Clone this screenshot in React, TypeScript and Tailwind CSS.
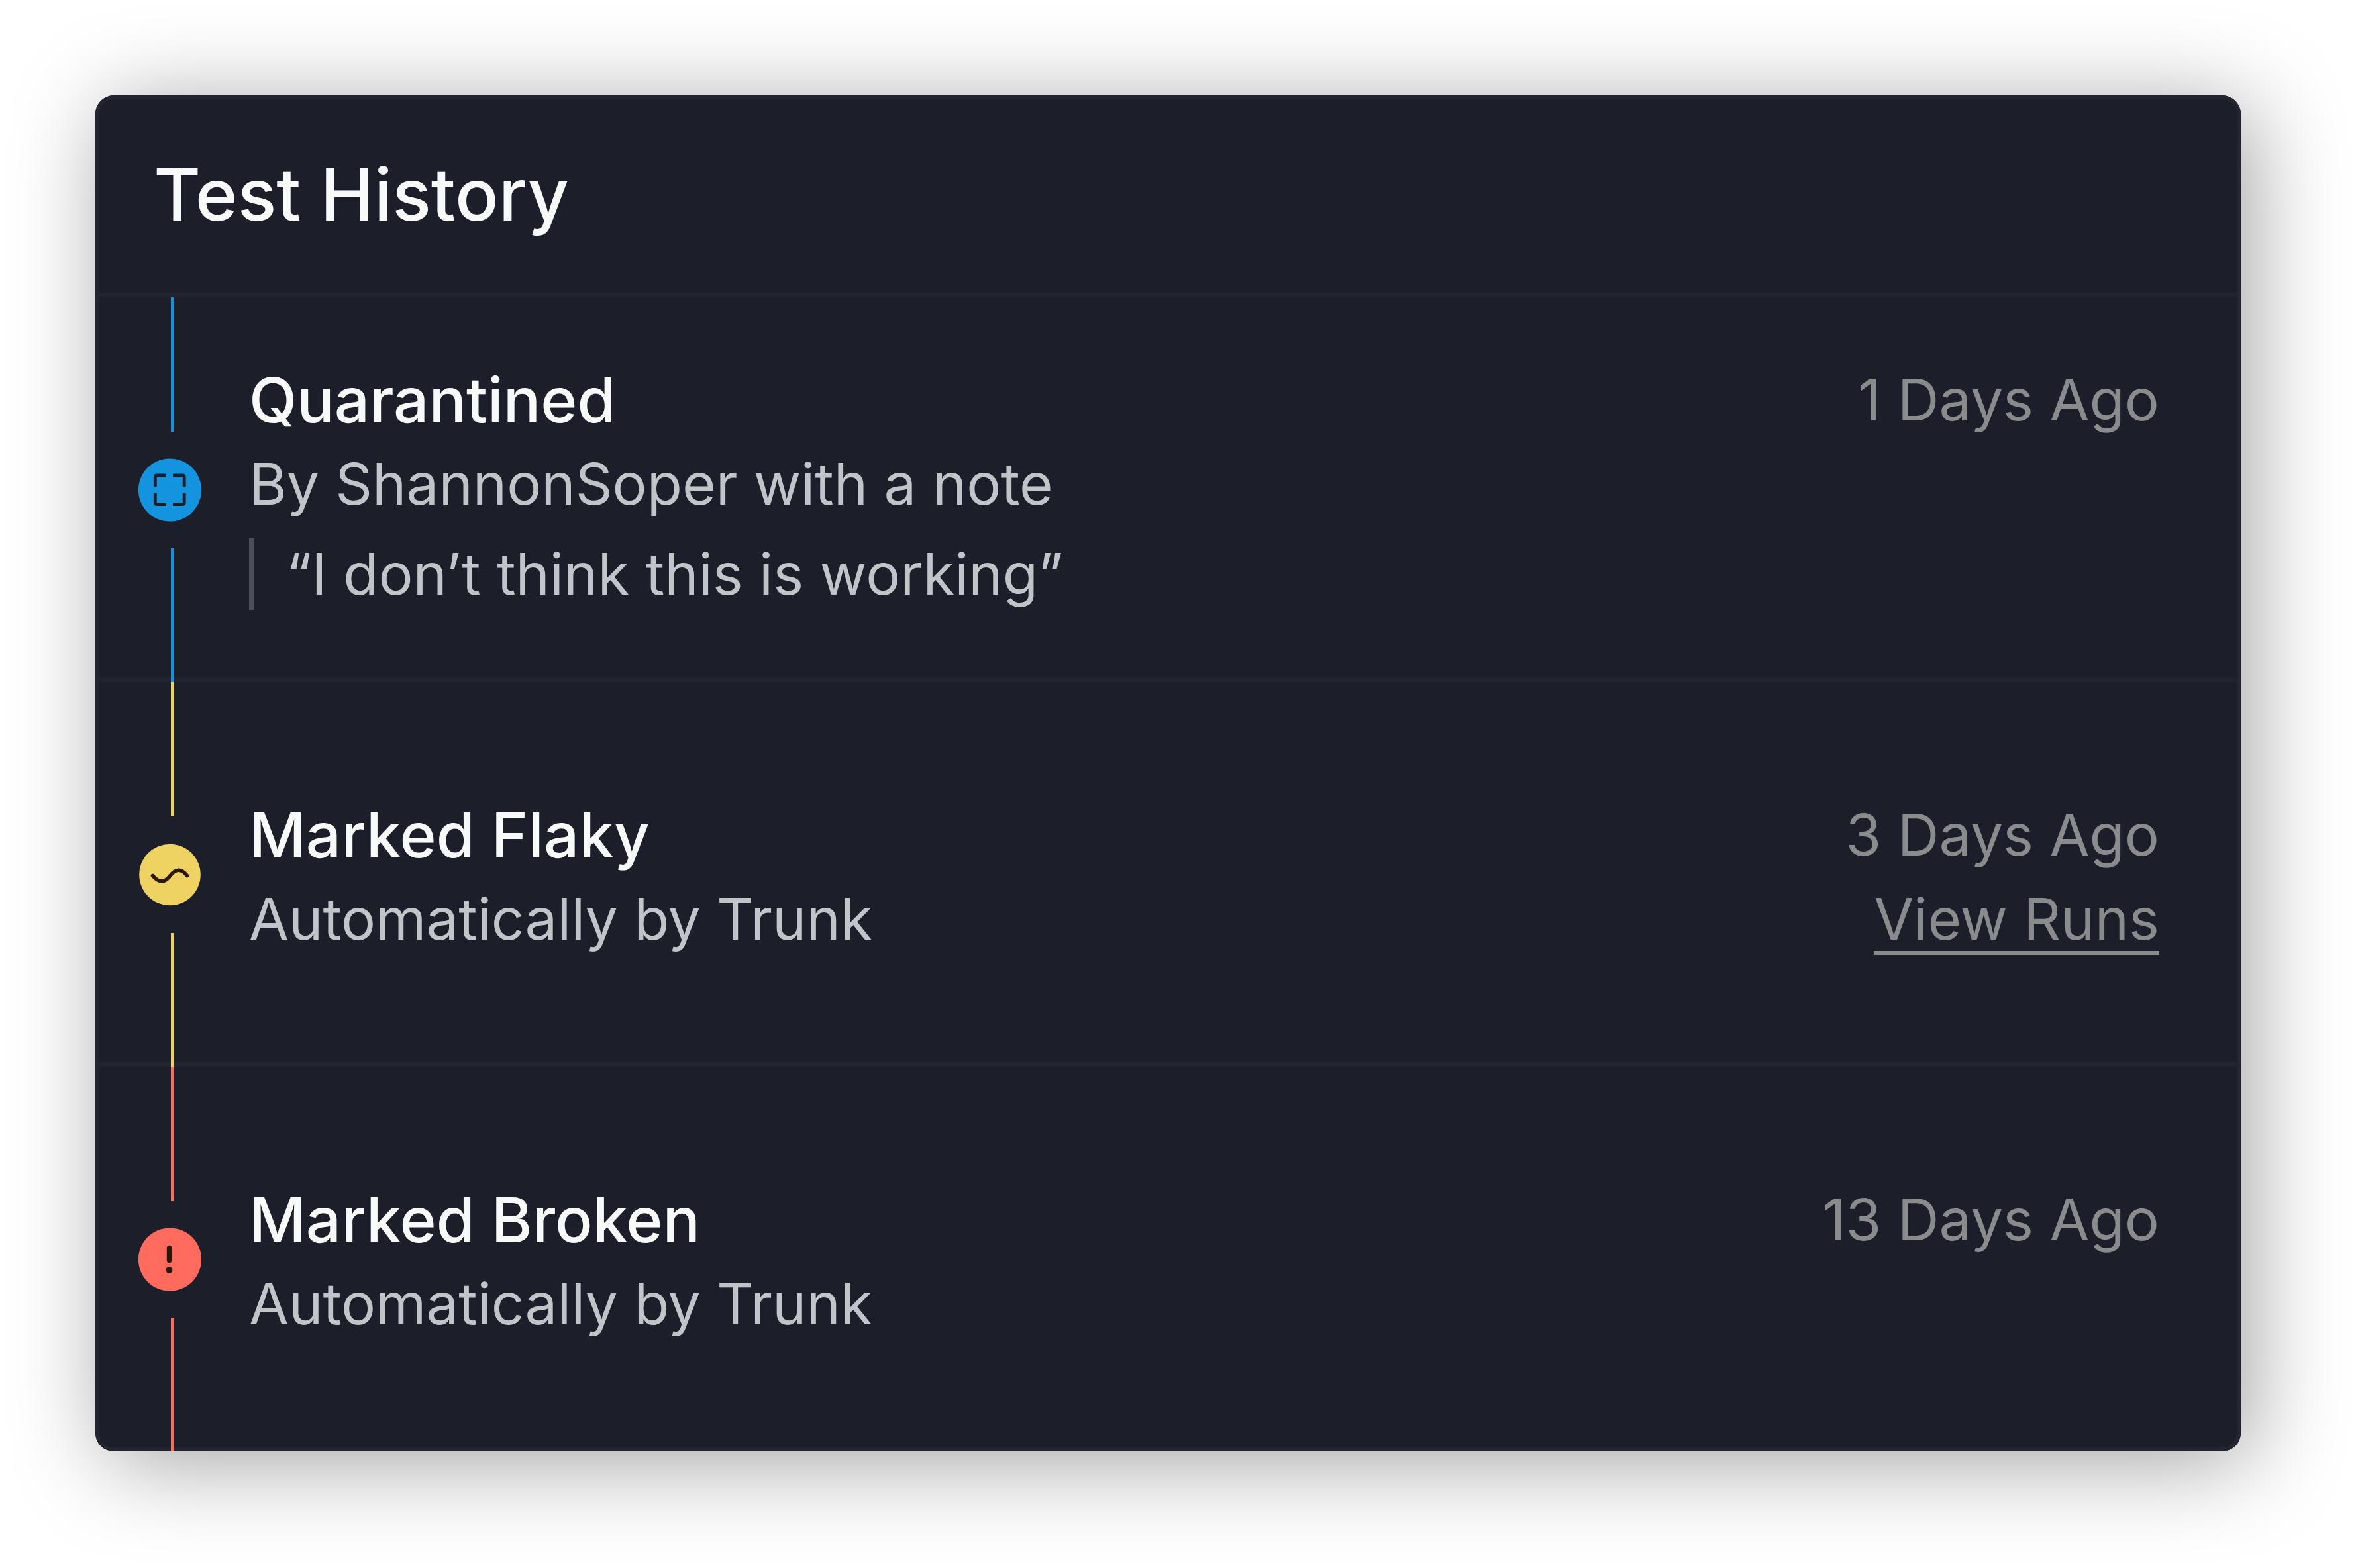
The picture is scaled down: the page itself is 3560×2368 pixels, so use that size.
import type { ReactNode } from 'react';

interface HistoryEvent {
  id: string;
  title: string;
  description: string;
  note?: string;
  date: string;
  runsHref?: string;
  lineClass: string;
  icon: ReactNode;
}

const QuarantinedIcon = () => (
  <svg className="w-24 h-24" viewBox="0 0 96 96" fill="none" aria-hidden="true">
    <circle cx="48.5" cy="48" r="47.6" fill="#1494df" />
    <path
      d="M43 25.8H29Q26.3 25.8 26.3 28.5V43M53 25.8H67.5Q70.2 25.8 70.2 28.5V43M26.3 52.5V67Q26.3 69.7 29 69.7H43M70.2 52.5V67Q70.2 69.7 67.5 69.7H53"
      stroke="#1c1e29"
      strokeWidth="4.8"
    />
  </svg>
);

const FlakyIcon = () => (
  <svg className="w-24 h-24" viewBox="0 0 96 96" fill="none" aria-hidden="true">
    <circle cx="48.5" cy="48" r="46.3" fill="#efd362" />
    <path
      d="M22.5 49.5C32 61 41 60 49 49.5C57 39 65.5 38 74.5 49.5"
      stroke="#2a1803"
      strokeWidth="5.6"
      strokeLinecap="round"
    />
  </svg>
);

const BrokenIcon = () => (
  <svg className="w-24 h-24" viewBox="0 0 96 96" fill="none" aria-hidden="true">
    <circle cx="48.5" cy="48" r="47.6" fill="#ff6b5c" />
    <path d="M47.5 30.5V49.5" stroke="#2a1803" strokeWidth="7.4" strokeLinecap="round" />
    <circle cx="47.5" cy="64" r="4.9" fill="#2a1803" />
  </svg>
);

const events: HistoryEvent[] = [
  {
    id: 'quarantined',
    title: 'Quarantined',
    description: 'By ShannonSoper with a note',
    note: '“I don’t think this is working”',
    date: '1 Days Ago',
    lineClass: 'bg-[#1494df]',
    icon: <QuarantinedIcon />,
  },
  {
    id: 'flaky',
    title: 'Marked Flaky',
    description: 'Automatically by Trunk',
    date: '3 Days Ago',
    runsHref: '#runs',
    lineClass: 'bg-[#efd362]',
    icon: <FlakyIcon />,
  },
  {
    id: 'broken',
    title: 'Marked Broken',
    description: 'Automatically by Trunk',
    date: '13 Days Ago',
    lineClass: 'bg-[#ff6b5c]',
    icon: <BrokenIcon />,
  },
];

function TimelineMarker({ event }: { event: HistoryEvent }) {
  return (
    <div className="flex flex-col items-center w-24 shrink-0">
      <div className={`w-1 flex-1 ml-2 ${event.lineClass}`} />
      <div className="my-10">{event.icon}</div>
      <div className={`w-1 flex-1 ml-2 ${event.lineClass}`} />
    </div>
  );
}

function HistoryRow({ event }: { event: HistoryEvent }) {
  // The divider is an inset shadow so the timeline runs over it unbroken
  return (
    <li className="flex min-h-[581px] pl-16 pr-[123px] shadow-[inset_0_-7px_0_#22242f] last:shadow-none">
      <TimelineMarker event={event} />
      <div className="flex flex-1 justify-between self-center ml-[72px]">
        <div>
          <h2 className="text-[94px] leading-[134px] font-medium text-[#f8f9f9]">{event.title}</h2>
          <p className="text-[87px] leading-[120px] text-[#c1c4c8]">{event.description}</p>
          {event.note && (
            <blockquote className="my-[22px] pl-12 border-l-8 border-[#4c4f57] text-[87px] leading-[108px] text-[#c1c4c8]">
              {event.note}
            </blockquote>
          )}
        </div>
        <div className="flex flex-col items-end text-[87px] text-[#898b8d]">
          <time className="leading-[134px]">{event.date}</time>
          {event.runsHref && (
            <a
              href={event.runsHref}
              className="leading-[120px] underline decoration-[6px] underline-offset-[17px]"
            >
              View Runs
            </a>
          )}
        </div>
      </div>
    </li>
  );
}

export default function App() {
  return (
    <main className="min-h-screen bg-white pt-36 pl-36 pr-[177px] pb-44 font-['Inter',sans-serif]">
      <section className="rounded-[28px] bg-[#1c1e29] shadow-[inset_0_0_0_6px_#22242f,16px_16px_140px_rgba(0,0,0,0.37)]">
        <header className="flex items-center h-[305px] px-[88px] border-b-[7px] border-[#22242f]">
          <h1 className="text-[109px] leading-[132px] font-medium text-[#f8f9f9]">Test History</h1>
        </header>
        <ul>
          {events.map((event) => (
            <HistoryRow key={event.id} event={event} />
          ))}
        </ul>
      </section>
    </main>
  );
}
